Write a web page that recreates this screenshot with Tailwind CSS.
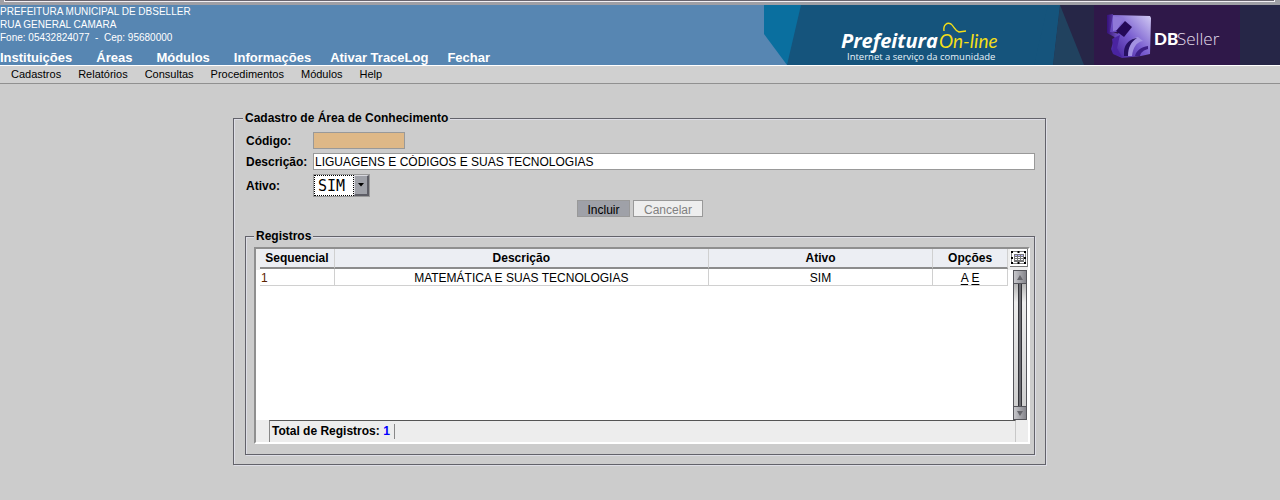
<!DOCTYPE html>
<html lang="pt-BR">
<head>
<meta charset="utf-8">
<title>Cadastro de Área de Conhecimento</title>
<script src="https://cdn.jsdelivr.net/npm/@tailwindcss/browser@4"></script>
</head>
<body class="min-h-screen bg-[#ccc] font-['Liberation_Sans',Arial,sans-serif] text-xs text-black">
<header>
  <div class="h-[5px] bg-[#9f9fa5]"><div class="mr-[5px] ml-1 h-0.5 border-r border-b border-l border-[#f2eff4] bg-[#68646e]"></div></div>
  <div class="flex h-[60px] justify-between bg-[#5786b2] text-white">
    <div class="flex flex-col justify-between whitespace-nowrap">
      <address class="text-[10px] leading-[13px] not-italic">PREFEITURA MUNICIPAL DE DBSELLER<br>RUA GENERAL CAMARA<br>Fone: 05432824077 &nbsp;-&nbsp; Cep: 95680000</address>
      <nav class="flex gap-[19px] text-[13px] leading-[15px] font-bold">
        <div class="flex gap-6"><a href="#">Instituições</a><a href="#">Áreas</a><a href="#">Módulos</a><a href="#">Informações</a></div>
        <a href="#">Ativar TraceLog</a><a href="#">Fechar</a>
      </nav>
    </div>
    <svg class="shrink-0" width="516" height="60" viewBox="0 0 516 60" role="img" aria-label="Prefeitura On-line - DBSeller">
      <defs>
        <linearGradient id="cube" x1="0" y1="1" x2="1" y2="0"><stop offset="0" stop-color="#3b1692"/><stop offset=".5" stop-color="#7a5fd0"/><stop offset="1" stop-color="#d3ccf4"/></linearGradient>
        <linearGradient id="side" x1="0" y1="0" x2="1" y2="0"><stop offset="0" stop-color="#35107c"/><stop offset="1" stop-color="#8268cf"/></linearGradient>
      </defs>
      <path d="M0 0H40V60H23L0 29Z" fill="#0a6f9f"/>
      <path d="M37 0H300V60H23Z" fill="#15547c"/>
      <path d="M296 0H516V60H289Z" fill="#262647"/>
      <path d="M284 0H296L289 60H270Z" fill="#15547c"/>
      <path d="M296 0L320 60H289Z" fill="#21425f"/>
      <path d="M330 0H476V60H330Z" fill="#2f1849"/>
      <path d="M343 10L349 9V27L357 30L354 34L343 28Z" fill="url(#side)"/>
      <path d="M349 10L386 11L387 13L386 49L377 51L358 53L349 49L347 44L351 31L356 27L346 27Z" fill="url(#cube)"/>
      <path d="M349 11L360 13L353 25L349 26Z" fill="#8f78d8"/>
      <path d="M361 16L368 22L360 32L352 26Z" fill="#240957"/>
      <path d="M348 34L356 30L353 43L358 52L350 49Z" fill="#4a24a0"/>
      <path d="M361 51C360 42 364 34 374 32L379 36C372 37 369 43 368 51Z" fill="#a392e2"/>
      <path d="M360 46C361 38 366 34 373 33C367 37 364 42 364 51H360Z" fill="#261062"/>
      <path d="M371 51C372 46 377 42 384 41V44C380 45 377 47 376 51Z" fill="#3d1f86"/>
      <text x="77" y="43" font-size="20" font-family="'Open Sans','Noto Sans',sans-serif" font-weight="700" font-style="italic" fill="#fff">Prefeitura</text>
      <text x="175" y="43" font-size="19" font-family="Lato,sans-serif" font-style="italic" fill="#f4de18">On-line</text>
      <text x="83" y="55" font-size="9.5" font-family="'Open Sans','Noto Sans',sans-serif" fill="#e8f3fa">Internet a serviço da comunidade</text>
      <text x="390" y="40" font-size="17" font-family="Lato,sans-serif" font-weight="900" fill="#fff">DB</text>
      <text x="413" y="40" font-size="17" font-family="'Open Sans','Noto Sans',sans-serif" font-weight="300" fill="#e5ddec">Seller</text>
      <path d="M180 26C179 20 183 17 187 19C190 21 191 26 195 27L202 26" fill="none" stroke="#f4de18" stroke-width="1.4"/>
    </svg>
  </div>
  <nav class="flex h-[19px] gap-[17px] border-t border-b border-t-white border-b-[#909090] bg-[#d0d0d0] pl-[11px] text-[11px] leading-[17px]">
    <a href="#">Cadastros</a><a href="#">Relatórios</a><a href="#">Consultas</a><a href="#">Procedimentos</a><a href="#">Módulos</a><a href="#">Help</a>
  </nav>
</header>

<main class="mx-auto mt-[27px] w-full max-w-[814px] pr-px">
  <form>
    <fieldset class="border border-[#62626a] px-[9px] pb-[9px] shadow-[1px_1px_0_#dedee6,inset_1px_1px_0_#dedee6]">
      <legend class="bg-[#ccc] px-0.5 leading-[14px] font-bold">Cadastro de Área de Conhecimento</legend>
      <div class="pt-[7px] pr-px pl-0.5">
        <div class="ml-px grid grid-cols-[67px_1fr] items-center gap-y-1">
          <label for="codigo" class="pt-0.5 leading-[15px] font-bold">Código:</label>
          <input id="codigo" type="text" readonly class="h-[17px] w-[92px] border border-[#999] bg-[#deb887] px-px">
          <label for="descricao" class="pt-0.5 leading-[15px] font-bold">Descrição:</label>
          <input id="descricao" type="text" value="LIGUAGENS E CÓDIGOS E SUAS TECNOLOGIAS" class="h-[17px] w-full border border-[#999] bg-white px-px">
          <label for="ativo" class="font-bold">Ativo:</label>
          <div class="relative h-[23px] w-[57px] border border-[#999] bg-white">
            <select id="ativo" class="block h-[21px] w-full appearance-none pt-0.5 pl-1 font-['DejaVu_Sans_Mono',monospace] text-[15px] leading-[19px] outline-none"><option>SIM</option><option>NÃO</option></select>
            <span class="pointer-events-none absolute inset-y-0 left-0 w-10 border border-dotted border-black"></span>
            <span class="pointer-events-none absolute inset-y-0 right-0 flex w-[15px] items-center justify-center border-t border-r-2 border-b-2 border-l border-t-[#d8d8de] border-r-[#5d5d65] border-b-[#5d5d65] border-l-[#d8d8de] bg-[#9fa1a8]">
              <svg width="6" height="4" viewBox="0 0 6 4"><path d="M0 0H6L3 3.5Z" fill="#000"/></svg>
            </span>
          </div>
        </div>
        <div class="mt-[3px] flex justify-center gap-[3px]">
          <button type="button" class="h-[17px] w-[53px] border border-[#999] bg-[#9fa1a8] pt-0.5 leading-[15px]">Incluir</button>
          <button type="button" disabled class="h-[17px] w-[70px] border border-[#999] bg-[#eee] pt-0.5 leading-[15px] text-[#808080]">Cancelar</button>
        </div>

        <fieldset class="mt-3 border border-[#62626a] pt-1 pr-1 pb-[10px] pl-2 shadow-[1px_1px_0_#dedee6,inset_1px_1px_0_#dedee6]">
          <legend class="bg-[#ccc] px-0.5 leading-[14px] font-bold">Registros</legend>
          <div class="border-2 border-t-[#8f8f8f] border-r-white border-b-white border-l-[#8f8f8f] bg-white">
            <div class="flex h-[171px]">
              <div class="h-[21px] w-1 shrink-0 bg-[#eee]"></div>
              <div class="flex-1">
                <table class="w-full table-fixed border-separate border-spacing-0 text-center leading-[14px]">
                  <colgroup><col class="w-[10%]"><col class="w-[50%]"><col class="w-[30%]"><col class="w-[10%]"></colgroup>
                  <thead class="bg-[#eceef3]">
                    <tr>
                      <th class="h-5 border-r border-b-2 border-r-[#d0d0d0] border-b-[#8c8c8c]">Sequencial</th>
                      <th class="border-r border-b-2 border-r-[#d0d0d0] border-b-[#8c8c8c]">Descrição</th>
                      <th class="border-r border-b-2 border-r-[#d0d0d0] border-b-[#8c8c8c]">Ativo</th>
                      <th class="border-r border-b-2 border-r-[#d0d0d0] border-b-[#8c8c8c]">Opções</th>
                    </tr>
                  </thead>
                  <tbody>
                    <tr>
                      <td class="border-r border-b border-[#d0d0d0] pt-0.5 pl-px text-left text-[#5a2300]">1</td>
                      <td class="border-r border-b border-[#d0d0d0] pt-0.5">MATEMÁTICA E SUAS TECNOLOGIAS</td>
                      <td class="border-r border-b border-[#d0d0d0] pt-0.5">SIM</td>
                      <td class="border-r border-b border-[#d0d0d0] pt-0.5"><a href="#" class="underline underline-offset-2">A</a> <a href="#" class="underline underline-offset-2">E</a></td>
                    </tr>
                  </tbody>
                </table>
              </div>
              <div class="flex w-5 shrink-0 flex-col">
                <div class="h-[21px] bg-[#eee] pl-0.5">
                  <button type="button" aria-label="Colunas" class="block size-[18px] border-r border-b border-[#777] bg-white">
                    <svg width="17" height="17" viewBox="0 0 17 17">
                      <path d="M1.5 2.5H15.5V14.5H1.5Z" fill="none" stroke="#000" stroke-dasharray="1 1"/>
                      <path d="M1 2h2v2H1zM7.500 2h2v2h-2zM14 2h2v2h-2zM1 8h2v2H1zM14 8h2v2h-2zM1 13h2v2H1zM7.500 13h2v2h-2zM14 13h2v2h-2z" fill="#000"/>
                      <path d="M4 5h10v8H4z" fill="#777"/>
                      <path d="M5 6h2v1H5zM8 6h2v1H8zM11 6h2v1h-2z" fill="#b9b6ff"/>
                      <path d="M5 8h2v1H5zM8 8h2v1H8zM11 8h2v1h-2zM5 10h2v1H5zM8 10h2v1H8zM11 10h2v1h-2z" fill="#fff"/>
                    </svg>
                  </button>
                </div>
                <div class="ml-[5px] flex w-[14px] flex-1 flex-col border border-[#55555b] bg-[#e4e4e4]">
                  <div class="flex h-[13px] items-center justify-center border-b border-[#55555b] bg-linear-to-r from-[#c8c8cc] to-[#85858c]"><svg width="6" height="5" viewBox="0 0 6 5"><path d="M3 0L6 5H0Z" fill="#66666c"/></svg></div>
                  <div class="flex flex-1 justify-center bg-linear-to-b from-[#b5b5b5] via-[#ededed] via-15% to-[#d0d0d0]"><div class="w-1 border-x border-[#333338] bg-[#6c6c72]"></div></div>
                  <div class="flex h-[13px] items-center justify-center border-t border-[#55555b] bg-linear-to-r from-[#c8c8cc] to-[#85858c]"><svg width="6" height="5" viewBox="0 0 6 5"><path d="M3 5L6 0H0Z" fill="#66666c"/></svg></div>
                </div>
              </div>
            </div>
            <div class="h-[22px] bg-[#ededed] pr-3 pl-[13px]">
              <div class="flex h-full items-start border-t border-r border-l border-t-[#555] border-r-[#c8c8c8] border-l-[#888] pt-[3px] pl-0.5">
                <span class="border-r border-[#888] pr-1 leading-[15px] font-bold">Total de Registros: <span class="text-[#00f]">1</span></span>
              </div>
            </div>
          </div>
        </fieldset>
      </div>
    </fieldset>
  </form>
</main>
</body>
</html>
